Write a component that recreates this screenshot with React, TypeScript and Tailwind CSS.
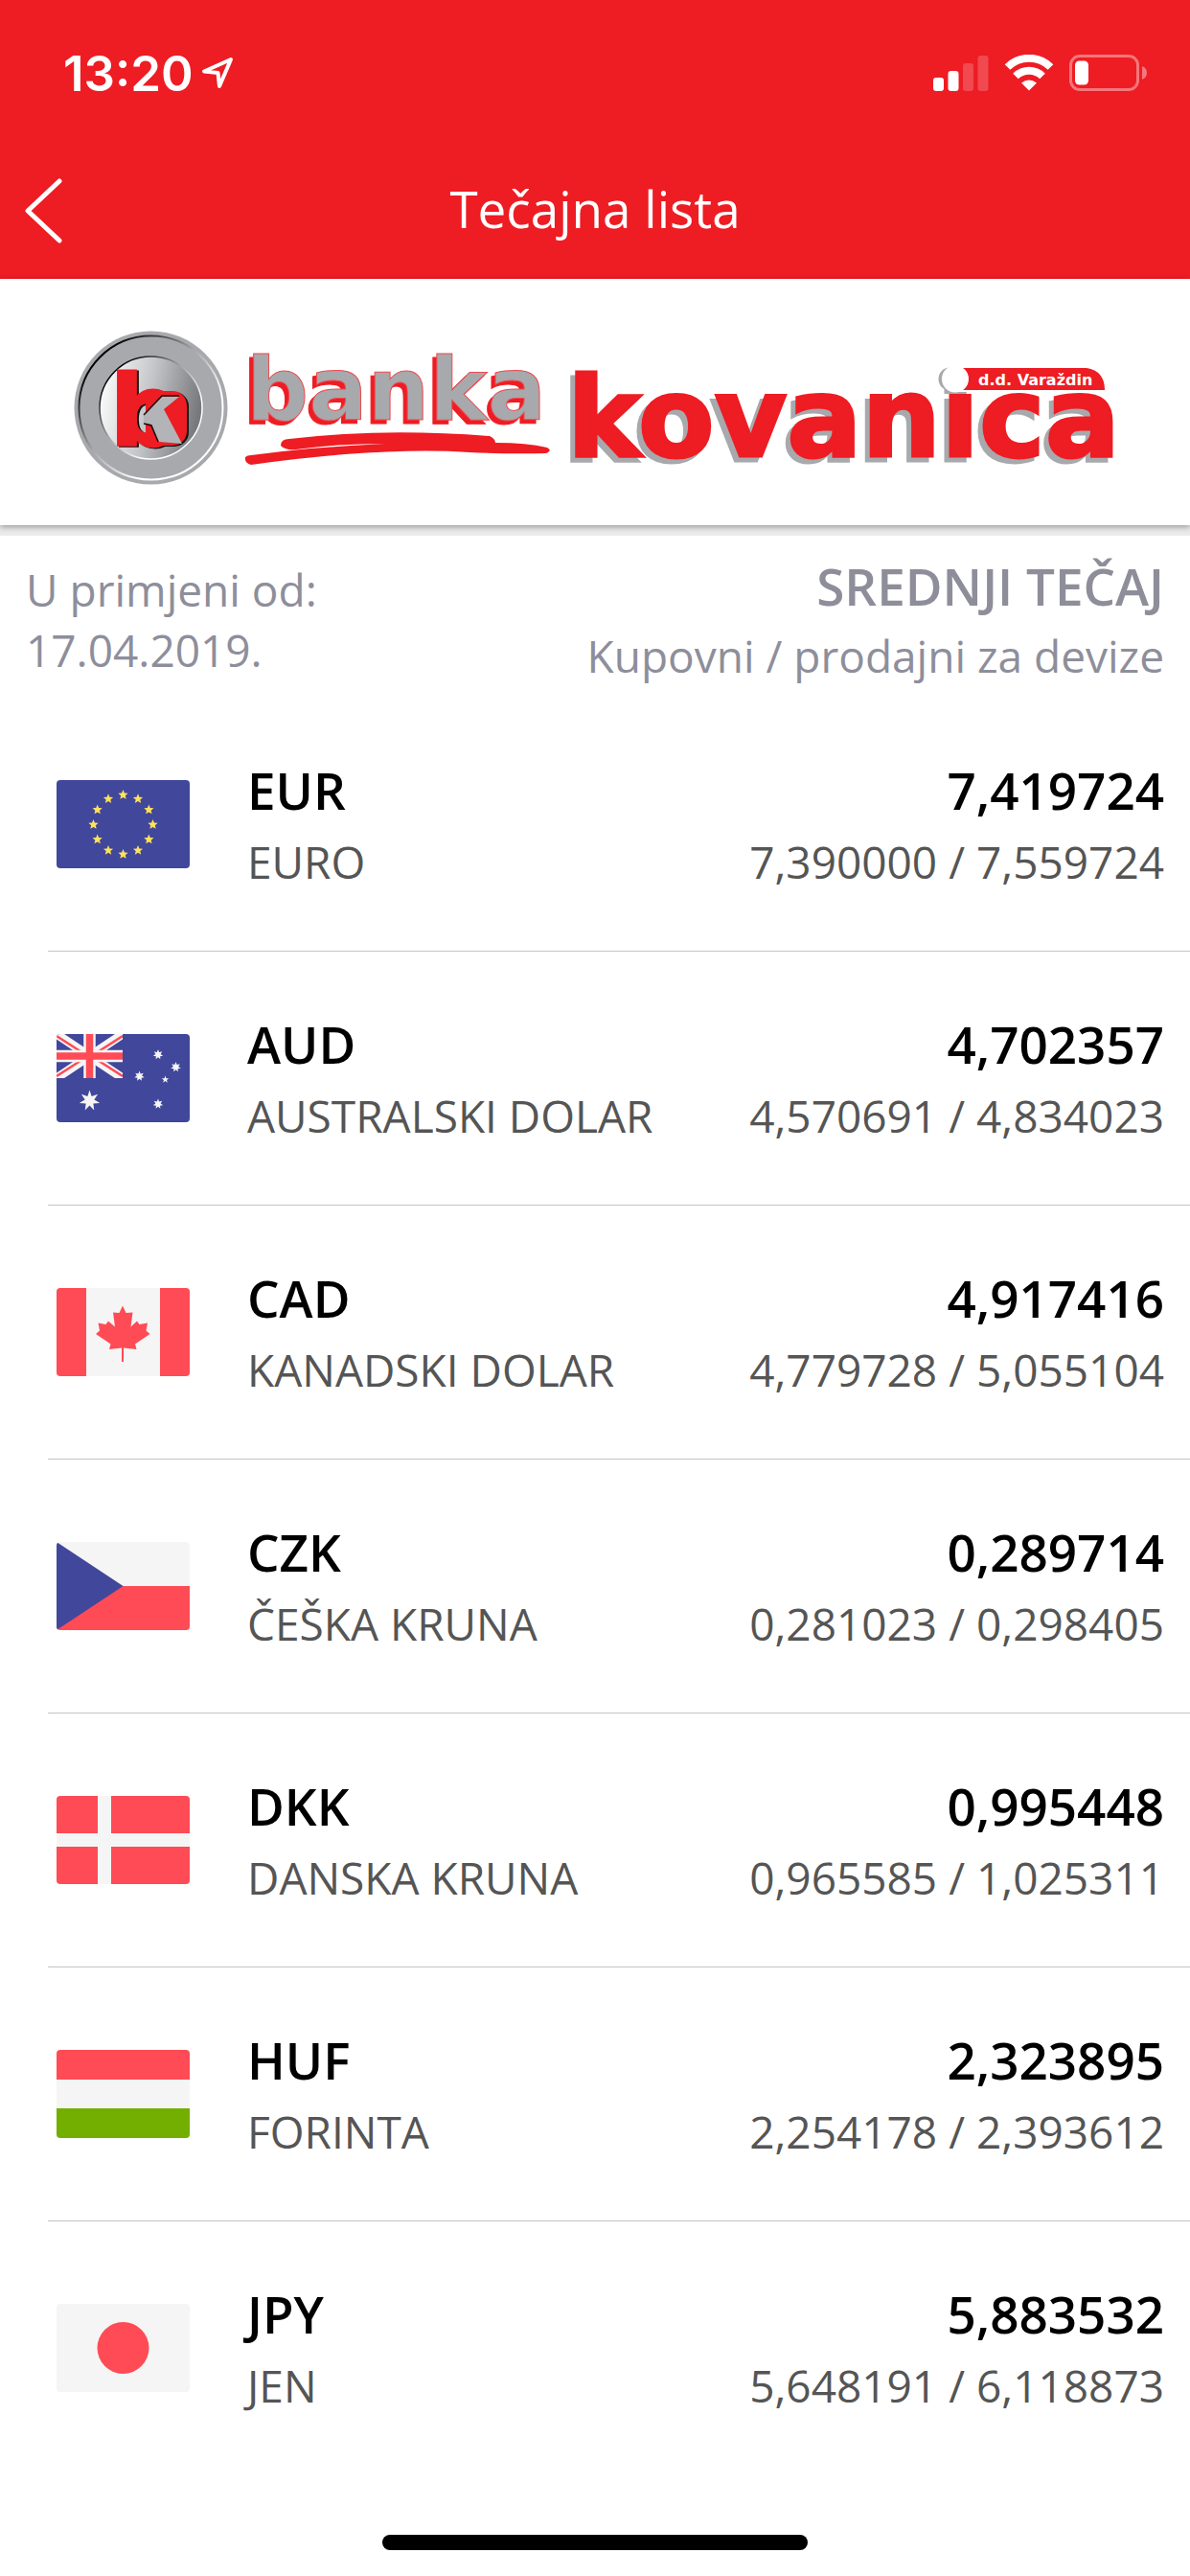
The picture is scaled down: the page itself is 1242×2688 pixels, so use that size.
import type { ReactNode } from "react";

const star = (cx: number, cy: number, r: number, n = 5, inner = 0.4) => {
  const points: string[] = [];
  for (let i = 0; i < n * 2; i++) {
    const radius = i % 2 === 0 ? r : r * inner;
    const angle = (Math.PI * i) / n - Math.PI / 2;
    points.push(
      `${(cx + radius * Math.cos(angle)).toFixed(2)},${(cy + radius * Math.sin(angle)).toFixed(2)}`
    );
  }
  return points.join(" ");
};

const Flag = ({ label, children }: { label: string; children: ReactNode }) => {
  return (
    <svg
      role="img"
      aria-label={label}
      viewBox="0 0 139 92"
      className="h-[92px] w-[139px] shrink-0 rounded-sm"
    >
      {children}
    </svg>
  );
};

const flags: Record<string, ReactNode> = {
  EUR: (
    <>
      <rect width="139" height="92" fill="#41479b" />
      {Array.from({ length: 12 }, (_, i) => (
        <polygon
          key={i}
          points={star(
            69.5 + 31 * Math.sin((i * Math.PI) / 6),
            46.5 - 31 * Math.cos((i * Math.PI) / 6),
            5.4,
            5,
            0.45
          )}
          fill="#ffe15a"
        />
      ))}
    </>
  ),
  AUD: (
    <>
      <rect width="139" height="92" fill="#41479b" />
      <svg width="69" height="46" viewBox="0 0 69 46">
        <path d="M0 0 69 46M69 0 0 46" stroke="#f5f5f5" strokeWidth="9" />
        <path d="M0 2 28 20M69 2 41 20M0 44 28 26M69 44 41 26" stroke="#ff4b55" strokeWidth="2.6" />
        <path d="M34.5 0V46M0 23H69" stroke="#f5f5f5" strokeWidth="12.5" />
        <path d="M34.5 0V46M0 23H69" stroke="#ff4b55" strokeWidth="7.5" />
      </svg>
      <g fill="#f5f5f5">
        <polygon points={star(34.5, 69.5, 11, 7, 0.45)} />
        <polygon points={star(106, 21.5, 5.4, 7, 0.5)} />
        <polygon points={star(124.5, 34.5, 5.4, 7, 0.5)} />
        <polygon points={star(86.5, 44, 5.4, 7, 0.5)} />
        <polygon points={star(106, 73, 5.4, 7, 0.5)} />
        <polygon points={star(113.5, 47.5, 4)} />
      </g>
    </>
  ),
  CAD: (
    <>
      <rect width="139" height="92" fill="#f5f5f5" />
      <path d="M0 0H31V92H0ZM108 0H139V92H108Z" fill="#ff4b55" />
      <path
        d="M69 18.5 72.5 26 79.5 25.5 77.5 40.5 84 34.5 86.5 38 95 36.5 93.5 44.5 97.5 48 82 58.5 83.5 64 70 62.5V77H68V62.5L55 64 56.5 58.5 41 48 45 44.5 43.5 36.5 51.5 38 54 34.5 61 40.5 59 25.5 65.5 26Z"
        fill="#ff4b55"
      />
    </>
  ),
  CZK: (
    <>
      <rect width="139" height="92" fill="#f5f5f5" />
      <rect y="46" width="139" height="46" fill="#ff4b55" />
      <path d="M0 0 69.5 46 0 92Z" fill="#41479b" />
    </>
  ),
  DKK: (
    <>
      <rect width="139" height="92" fill="#ff4b55" />
      <path d="M43 0H57V39H139V53H57V92H43V53H0V39H43Z" fill="#f5f5f5" />
    </>
  ),
  HUF: (
    <>
      <rect width="139" height="92" fill="#f5f5f5" />
      <rect width="139" height="31" fill="#ff4b55" />
      <rect y="61" width="139" height="31" fill="#73af00" />
    </>
  ),
  JPY: (
    <>
      <rect width="139" height="92" fill="#f5f5f5" />
      <circle cx="69.5" cy="46" r="27" fill="#ff4b55" />
    </>
  ),
};

const rates = [
  { code: "EUR", name: "EURO", middle: "7,419724", buy: "7,390000", sell: "7,559724" },
  { code: "AUD", name: "AUSTRALSKI DOLAR", middle: "4,702357", buy: "4,570691", sell: "4,834023" },
  { code: "CAD", name: "KANADSKI DOLAR", middle: "4,917416", buy: "4,779728", sell: "5,055104" },
  { code: "CZK", name: "ČEŠKA KRUNA", middle: "0,289714", buy: "0,281023", sell: "0,298405" },
  { code: "DKK", name: "DANSKA KRUNA", middle: "0,995448", buy: "0,965585", sell: "1,025311" },
  { code: "HUF", name: "FORINTA", middle: "2,323895", buy: "2,254178", sell: "2,393612" },
  { code: "JPY", name: "JEN", middle: "5,883532", buy: "5,648191", sell: "6,118873" },
];

const StatusBar = () => {
  return (
    <div className="flex h-[152px] items-center justify-between pr-11 pl-[66px] text-white">
      <div className="flex items-center gap-2">
        <span className="font-['Inter',sans-serif] text-[51px] leading-none font-semibold">13:20</span>
        <svg viewBox="0 0 34 34" className="size-[34px]" fill="none" stroke="currentColor" strokeWidth="4" strokeLinejoin="round">
          <path d="M31 3 3 15.5 17.5 17 19 31Z" />
        </svg>
      </div>
      <div className="flex items-center gap-4">
        <svg viewBox="0 0 58 37" className="h-[37px] w-[58px]" fill="currentColor">
          <rect y="23" width="11" height="14" rx="3" />
          <rect x="15.5" y="16" width="11" height="21" rx="3" />
          <rect x="31" y="8" width="11" height="29" rx="3" opacity=".2" />
          <rect x="46.5" width="11" height="37" rx="3" opacity=".2" />
        </svg>
        <svg viewBox="0 0 52 38" className="h-[38px] w-[52px]" fill="none" stroke="currentColor" strokeWidth="8">
          <path d="M3.5 13A32 32 0 0 1 48.5 13" />
          <path d="M12 22.5A20 20 0 0 1 40 22.5" />
          <path d="M26 37.5 18 29.5Q26 23.5 34 29.5Z" fill="currentColor" stroke="none" />
        </svg>
        <svg viewBox="0 0 82 38" className="h-[38px] w-[82px]" fill="currentColor">
          <rect x="1.5" y="1.5" width="70" height="35" rx="9.5" fill="none" stroke="currentColor" strokeWidth="3" opacity=".4" />
          <rect x="6" y="6.5" width="14" height="25" rx="4.5" />
          <path d="M76 12Q81 14 81 19T76 26Z" opacity=".4" />
        </svg>
      </div>
    </div>
  );
};

const Header = () => {
  return (
    <header className="bg-[#ee1c23]">
      <StatusBar />
      <div className="grid h-[139px] grid-cols-[1fr_auto_1fr] items-center pb-1 text-white">
        <button type="button" aria-label="Natrag" className="w-24 py-3 pl-6">
          <svg viewBox="0 0 44 68" className="h-[68px] w-[44px]" fill="none" stroke="currentColor" strokeWidth="5" strokeLinecap="round" strokeLinejoin="round">
            <path d="M38 3 5 34 38 65" />
          </svg>
        </button>
        <h1 className="pb-1 text-[53px] leading-none">Tečajna lista</h1>
      </div>
    </header>
  );
};

const Logo = () => {
  return (
    <div className="relative h-[257px] bg-white px-[76px] py-[50px] shadow-[0_2px_6px_rgba(0,0,0,0.35),0_11px_0_#ebebeb]">
      <svg
        viewBox="76 341 1090 166"
        className="w-full overflow-visible"
        role="img"
        aria-label="banka kovanica d.d. Varaždin"
      >
        <defs>
          <linearGradient id="coin" x1="0" y1="0.2" x2="1" y2="0.4">
            <stop offset="0" stopColor="#fff" />
            <stop offset="0.5" stopColor="#c4c5c8" />
            <stop offset="1" stopColor="#77787b" />
          </linearGradient>
          <linearGradient id="edge" x1="0" y1="0" x2="1" y2="1">
            <stop offset="0.15" stopColor="#000" />
            <stop offset="0.45" stopColor="#a7a9ac" />
            <stop offset="0.7" stopColor="#fff" />
          </linearGradient>
        </defs>
        <circle cx="157.5" cy="425.5" r="80" fill="#a7a9ac" />
        <circle cx="157.5" cy="425.5" r="75" fill="none" stroke="url(#edge)" strokeWidth="2" />
        <circle cx="157.5" cy="425.5" r="53.5" fill="url(#coin)" stroke="url(#edge)" strokeWidth="1.5" />
        <g className="font-['DejaVu_Sans',sans-serif] font-bold">
          <g fill="#ee1c23" className="drop-shadow-[2px_1px_0_#111]">
            <text x="115" y="464" fontSize="102" stroke="#ee1c23" strokeWidth="3">
              b
            </text>
            <rect x="152" y="408" width="43" height="57" rx="15" />
          </g>
          <path
            d="M150 434 169 414 187 414 171 427 190 463 166 461 158 443 150 441Z"
            fill="#b3b4b7"
          />
          <path d="M187 413H169L150 433M150 442 158 444 165 461" fill="none" stroke="#111" strokeWidth="1.5" />
          <text
            x="257"
            y="438"
            fontSize="91"
            fill="#a7a9ac"
            stroke="#ee4a50"
            strokeWidth="1"
            className="drop-shadow-[-4px_4px_0_#ee1c23]"
          >
            banka
          </text>
          <text
            x="592"
            y="476"
            fontSize="116"
            fill="#ee1c23"
            stroke="#ee1c23"
            strokeWidth="3"
            className="drop-shadow-[-5px_5px_0_#a7a9ac]"
          >
            kovanica
          </text>
        </g>
        <path
          d="M256 477Q258 475 262 475Q330 466 402 463Q350 463 309 469Q297 470 293 465Q293 458 302 458Q400 446 511 455Q517 458 517 462Q550 462 571 467Q577 470 570 473Q530 474 490 472Q400 466 262 485Q255 483 256 477Z"
          fill="#ee1c23"
        />
        <path d="M1000 382H1137Q1155 386 1155 409H1000Z" fill="#fff" />
        <path d="M1003 384H1134Q1153 387 1153 407H1003Z" fill="#ee1c23" />
        <ellipse cx="991" cy="395.5" rx="11.5" ry="12" fill="#a7a9ac" />
        <ellipse cx="997" cy="395.5" rx="14" ry="14" fill="#fff" />
        <text x="1021" y="402" fontSize="16" fill="#fff" className="font-['DejaVu_Sans',sans-serif] font-bold">
          d.d. Varaždin
        </text>
      </svg>
    </div>
  );
};

const App = () => {
  return (
    <div className="flex min-h-screen flex-col bg-white font-['Open_Sans',sans-serif]">
      <Header />
      <Logo />
      <main className="grow">
        <div className="flex items-start justify-between px-[27px] pt-7 text-[46px] text-[#8e8e9b]">
          <p className="pt-2 leading-[63px]">
            U primjeni od:
            <br />
            17.04.2019.
          </p>
          <div className="text-right">
            <h2 className="text-[53px] leading-[72px] font-semibold">SREDNJI TEČAJ</h2>
            <p className="leading-[72px]">Kupovni / prodajni za devize</p>
          </div>
        </div>
        <ul className="mt-2">
          {rates.map((rate) => (
            <li
              key={rate.code}
              className="ml-[50px] flex h-[265px] items-center border-b border-[#c4c4c6] pr-[27px] pl-[9px] last:border-transparent"
            >
              <Flag label={rate.code}>{flags[rate.code]}</Flag>
              <div className="ml-[60px] grow pt-1 leading-[74px]">
                <p className="text-[53px] font-semibold">{rate.code}</p>
                <p className="text-[46px] text-[#555]">{rate.name}</p>
              </div>
              <div className="pt-1 text-right leading-[74px]">
                <p className="text-[53px] font-semibold">{rate.middle}</p>
                <p className="text-[46px] text-[#555]">
                  {rate.buy} / {rate.sell}
                </p>
              </div>
            </li>
          ))}
        </ul>
      </main>
      <div className="mx-auto mb-[27px] h-4 w-[444px] rounded-full bg-black" />
    </div>
  );
};

export default App;
